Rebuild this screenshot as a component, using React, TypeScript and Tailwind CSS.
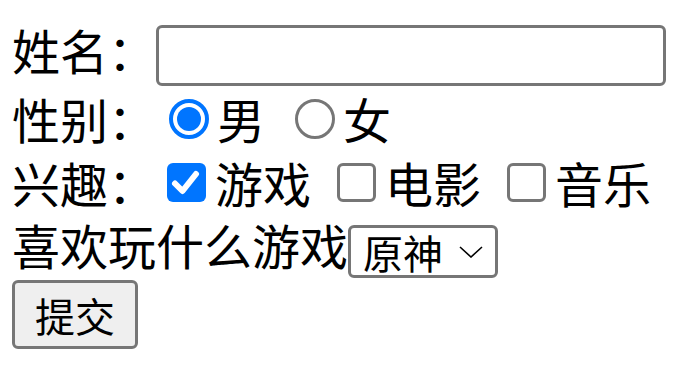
import React from "react";

const Radio = ({ checked, className }: { checked?: boolean; className?: string }) =>
  checked ? (
    <span className={`flex h-[40px] w-[40px] shrink-0 items-center justify-center rounded-full border-[4px] border-[#0075ff] bg-white ${className ?? ""}`}>
      <span className="h-[24px] w-[24px] rounded-full bg-[#0075ff]" />
    </span>
  ) : (
    <span className={`block h-[40px] w-[40px] shrink-0 rounded-full border-[3px] border-[#767676] bg-white ${className ?? ""}`} />
  );

const Check = ({ checked, className }: { checked?: boolean; className?: string }) =>
  checked ? (
    <span className={`flex h-[39px] w-[39px] shrink-0 items-center justify-center rounded-[6px] bg-[#0075ff] ${className ?? ""}`}>
      <svg width="39" height="39" viewBox="0 0 39 39">
        <path d="M8 20.5 L15.5 28 L29 11" fill="none" stroke="white" strokeWidth="6" strokeLinecap="round" strokeLinejoin="round" />
      </svg>
    </span>
  ) : (
    <span className={`block h-[39px] w-[39px] shrink-0 rounded-[6px] border-[3px] border-[#767676] bg-white ${className ?? ""}`} />
  );

export default function App() {
  return (
    <div className="h-[366px] w-[691px] overflow-hidden bg-white pl-[12px] font-['Noto_Sans_CJK_SC','Noto_Sans_CJK_JP',sans-serif] text-[48px] leading-[48px] text-black">
      <div className="flex h-[90px] items-start">
        <span className="mt-[25px] whitespace-nowrap">姓名：</span>
        <input
          type="text"
          className="mt-[25px] h-[61px] w-[510px] rounded-[6px] border-[3px] border-[#767676] bg-white outline-none"
        />
      </div>
      <div className="flex h-[65px] items-start">
        <span className="mt-[4px] whitespace-nowrap">性别：</span>
        <Radio checked className="ml-[13px] mr-[8px] mt-[9px]" />
        <span className="mt-[4px]">男</span>
        <Radio className="ml-[30px] mr-[8px] mt-[9px]" />
        <span className="mt-[4px]">女</span>
      </div>
      <div className="flex h-[65px] items-start">
        <span className="mt-[3px] whitespace-nowrap">兴趣：</span>
        <Check checked className="ml-[11px] mr-[9px] mt-[8px]" />
        <span className="mt-[3px] whitespace-nowrap">游戏</span>
        <Check className="ml-[26px] mr-[9px] mt-[8px]" />
        <span className="mt-[3px] whitespace-nowrap">电影</span>
        <Check className="ml-[26px] mr-[9px] mt-[8px]" />
        <span className="mt-[3px] whitespace-nowrap">音乐</span>
      </div>
      <div className="flex h-[60px] items-start">
        <span className="mt-[0px] whitespace-nowrap">喜欢玩什么游戏</span>
        <div className="mt-[5px] flex h-[53px] w-[150px] items-center rounded-[6px] border-[3px] border-[#767676] bg-white pl-[12px] text-[40px] leading-[40px]">
          <span className="whitespace-nowrap">原神</span>
          <svg className="ml-[16px]" width="24" height="12" viewBox="0 0 24 12">
            <path d="M1 1 L12 11 L23 1" fill="none" stroke="black" strokeWidth="1.6" />
          </svg>
        </div>
      </div>
      <div className="flex">
        <button className="flex h-[69px] w-[126px] items-center justify-center rounded-[6px] border-[3px] border-[#767676] bg-[#efefef] text-[40px] leading-[40px]">
          提交
        </button>
      </div>
    </div>
  );
}
